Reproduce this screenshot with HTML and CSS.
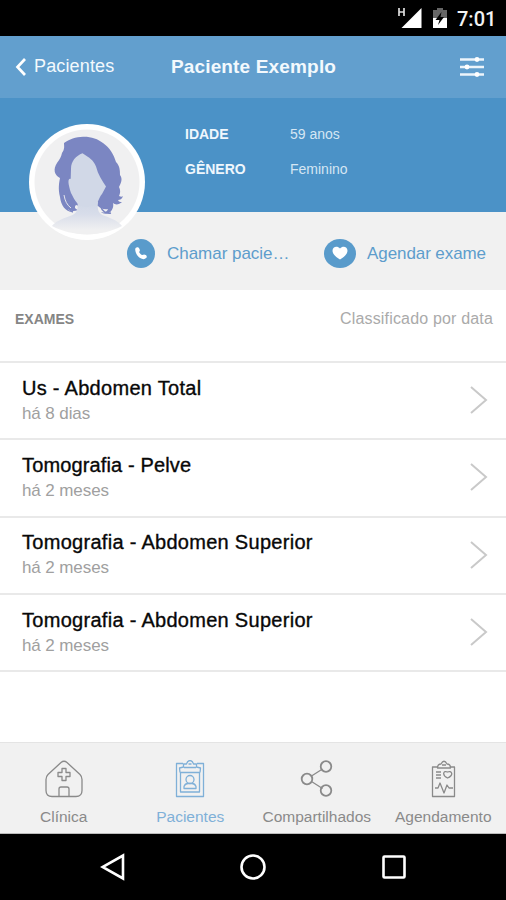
FILE: index.html
```html
<!DOCTYPE html>
<html lang="pt-BR">
<head>
<meta charset="utf-8">
<title>Paciente Exemplo</title>
<link rel="stylesheet" href="styles.css">
</head>
<body>
<div class="status">
  <svg class="signal" width="26" height="24" viewBox="0 0 26 24"><path d="M3 2v8M8 2v8M3 6h5" stroke="#ddd" stroke-width="1.700" fill="none"/><path d="M25.500 2v20H5.500z" fill="#fff"/></svg>
  <svg class="battery" width="16" height="22" viewBox="0 0 16 22"><path d="M1 3h4V1h6v2h4v8H1z" fill="#666"/><path d="M1 11h14v10H1z" fill="#fff"/><path d="M9.500 5 3.500 13h4L6 18l6-8H8.500z" fill="#000"/></svg>
  <span class="clock">7:01</span>
</div>
<header class="topbar">
  <div class="back"><svg width="12" height="20" viewBox="0 0 12 20"><path d="M10 2 2.500 10l7.500 8" fill="none" stroke="#fff" stroke-width="2.700"/></svg><span>Pacientes</span></div>
  <h1>Paciente Exemplo</h1>
  <svg class="filters" width="26" height="20" viewBox="0 0 26 20"><path d="M1 2.500h24M1 10h24M1 17.500h24" stroke="#edf5fb" stroke-width="2.300"/><g fill="#fff"><circle cx="18" cy="2.500" r="2.400"/><circle cx="8" cy="10" r="2.400"/><circle cx="18" cy="17.500" r="2.400"/></g></svg>
</header>
<section class="profile">
  <div class="avatar">
    <svg width="116" height="116" viewBox="0 0 116 116">
      <defs><linearGradient id="skin" gradientUnits="userSpaceOnUse" x1="0" y1="80" x2="0" y2="106"><stop offset="0" stop-color="#d1d8e7"/><stop offset=".4" stop-color="#d8ddea"/><stop offset="1" stop-color="#f0f0f1"/></linearGradient></defs>
      <circle cx="58" cy="58" r="58" fill="#fff"/><circle cx="58" cy="58" r="52.500" fill="#f0f0f1"/>
      <path d="M35 19c5-4 12-6 19-6.300 8-.2 15 2.300 20 6.300 7 5 11 12 13 19 4 4 4 9 4 13 3 4 1 8-1 12 2 4 1 7 0 9 2 1 3 1 4 0-1 3-3 4-5 4 1 2 2 2 4 2-3 3-7 3-9 1 1 4-1 8-4 10-3 1-6 1-8-1 3 1 6 0 7-3-4 1-8-1-10-3-8 2-15 2-22-1-2 2-1 4 2 5-4 2-8 1-10-1 1 2 3 3 5 3-8 0-12-7-13-15-2-8-1-14 0-19-6-3-7-9-3-15 3-4 4-6 5-10 3-4 2-7 2-10z" fill="#7b86c2"/>
      <path d="M48.500 78c1 9-1.500 12-7.500 14-9 3-15 6-18 10 20 11 50 11 70 0-4-5-9-7-17-10-6-2-8-5-7-14z" fill="url(#skin)"/>
      <path d="M43 82c-4 2-3 5 1 6M72 83c1 4 5 7 10 6" fill="none" stroke="#7b86c2" stroke-width="1.500"/>
      <path d="m35 71c1 6 3 10 7 13" fill="none" stroke="#f0f0f1" stroke-width=".9"/>
      <path d="M53.500 29.300C47 32 42 37 42 45l-.3 10c-3-1-3 4 .3 14 3 6 5 9 8 12 5 3 14 2 18-1 2-5 3-8 5-10l4-7.500c-4-6-8-12-10-20-3-7-6-8-13.500-13.200z" fill="#d1d8e7"/>
    </svg>
  </div>
  <dl><dt>IDADE</dt><dd>59 anos</dd><dt>GÊNERO</dt><dd>Feminino</dd></dl>
</section>
<section class="actions">
  <a class="call"><svg width="28" height="29" viewBox="0 0 28 29"><ellipse cx="14" cy="14.500" rx="14" ry="14.500" fill="#599bcb"/><path d="M8.200 10.200c0-1.500 2-2.500 3.200-1.600.8.600 1.700 2.200 1.400 3.300l-.8 1c1 1.700 1.900 2.500 3.500 3.200 1-1 2.200-.9 3.300 0 1.200.9 1.300 1.900.3 3-1.500 1.700-4 1.200-6-.1-3-2-4.900-5.600-4.900-8.800z" fill="#fff"/></svg><span>Chamar pacie…</span></a>
  <a class="schedule"><svg width="32" height="29" viewBox="0 0 32 29"><ellipse cx="16" cy="14.500" rx="16" ry="14.500" fill="#599bcb"/><path d="M16 20.500c-4-2.400-7.500-5.500-7.500-8.700 0-4.500 5-5.300 7.500-2.300 2.500-3 7.500-2.200 7.500 2.300 0 3.200-3.500 6.300-7.500 8.700z" fill="#fff"/></svg><span>Agendar exame</span></a>
</section>
<div class="listhead"><h2>EXAMES</h2><span>Classificado por data</span></div>
<ul class="exams">
  <li><div><b>Us - Abdomen Total</b><small>há 8 dias</small></div><svg width="18" height="30" viewBox="0 0 18 30"><path d="m1 2 15 13L1 28"/></svg></li>
  <li><div><b class="snug">Tomografia - Pelve</b><small>há 2 meses</small></div><svg width="18" height="30" viewBox="0 0 18 30"><path d="m1 2 15 13L1 28"/></svg></li>
  <li><div><b>Tomografia - Abdomen Superior</b><small>há 2 meses</small></div><svg width="18" height="30" viewBox="0 0 18 30"><path d="m1 2 15 13L1 28"/></svg></li>
  <li><div><b>Tomografia - Abdomen Superior</b><small>há 2 meses</small></div><svg width="18" height="30" viewBox="0 0 18 30"><path d="m1 2 15 13L1 28"/></svg></li>
</ul>
<nav class="tabs">
  <a><svg width="38" height="38" viewBox="0 0 38 38"><path d="M16 2.500q3-2.500 6 0l13 12q2 2 2 5v11q0 6-6 6H7q-6 0-6-6v-11q0-3 2-5z"/><path d="M17 8.500h4v4h4v4h-4v4h-4v-4h-4v-4h4zM14 36v-7q0-2 2-2h6q2 0 2 2v7"/></svg><span>Clínica</span></a>
  <a class="active"><svg width="38" height="38" viewBox="0 0 38 38"><path d="M12 3.500H5.500v33h27v-33H26M9.500 12.500v19.500h19V12.500zM9 12.500 8.500 8l4-1V4h3q1-3.500 3.500-3.500T22.500 4h3v3l4 1-.5 4.500M13 7.500h12M17.500 4h3"/><circle cx="19" cy="19.500" r="4"/><path d="M13 28.500v-2q1-3 4-3h4q3 0 4 3v2z"/></svg><span>Pacientes</span></a>
  <a><svg width="38" height="38" viewBox="0 0 38 38"><path d="m13.500 16 11-7M13.500 21.500l11 7"/><g stroke-width="1.800"><circle cx="9" cy="19" r="5.300"/><circle cx="28" cy="6.500" r="5.300"/><circle cx="28" cy="30.500" r="5.300"/></g></svg><span>Compartilhados</span></a>
  <a><svg width="38" height="38" viewBox="0 0 38 38"><path d="M14 7H8.500v29.500h22V7H26M13.500 8q0-4 3.500-4 3-5.500 6 0 3.500 0 3.500 4zM18 5h4M12 12h5M12 15h5M12 18h5M23.500 18c-6-3-4-8 0-6 4-2 7 3 0 6zM11 28h3l2-5 4 10 3-8 2 3h4"/></svg><span>Agendamento</span></a>
</nav>
<footer class="sysnav">
  <svg width="26" height="28" viewBox="0 0 26 28"><path d="M23 2.500v23L2.500 14z"/></svg>
  <svg width="28" height="28" viewBox="0 0 28 28"><circle cx="14" cy="14" r="11.500"/></svg>
  <svg width="26" height="28" viewBox="0 0 26 28"><rect x="2.500" y="3.500" width="21" height="21" rx="1"/></svg>
</footer>
</body>
</html>
```

FILE: styles.css
```css
* { box-sizing: border-box; margin: 0; padding: 0; }
body { width: 506px; height: 900px; overflow: hidden; background: #fff; font-family: "Liberation Sans", Arial, sans-serif; }
svg { display: block; flex: none; }
span, h1, h2, b, small, dt, dd { white-space: nowrap; }
.status { height: 36px; background: #000; display: flex; align-items: center; justify-content: flex-end; padding-right: 11px; color: #f2f2f2; }
.signal { margin-right: 10px; }
.battery { margin-right: 9px; }
.clock { font: 500 20px/36px Roboto, sans-serif; width: 38px; padding-top: 2px; }
.topbar { height: 62px; background: #629fce; color: #f3f9fd; display: grid; grid-template-columns: 155px 1fr 155px; align-items: center; padding-bottom: 1px; }
.back { display: flex; align-items: center; gap: 7px; padding-left: 15px; font-size: 18px; letter-spacing: .15px; }
.topbar h1 { font-size: 19px; letter-spacing: .16px; text-align: center; padding-left: 1px; }
.filters { justify-self: end; margin-right: 21px; }
.profile { height: 114px; background: #4b92c7; color: #eff7fd; display: flex; align-items: flex-start; padding: 26px 0 0 29px; }
.avatar { position: relative; width: 116px; height: 116px; flex: none; }
dl { display: grid; grid-template-columns: 105px auto; row-gap: 15px; margin-left: 40px; font-size: 14px; line-height: 20px; }
dt { font-weight: 700; }
dd { color: #d5e6f3; }
.actions { height: 78px; background: #f1f1f1; color: #5d9dcc; display: flex; align-items: center; padding: 5px 0 0 127px; font-size: 17px; }
.actions a { display: flex; align-items: center; gap: 12px; }
.call { width: 197px; }
.call span { letter-spacing: -.03px; }
.actions .schedule { gap: 11px; }
.schedule span { letter-spacing: -.08px; }
.listhead { height: 71px; display: flex; justify-content: space-between; padding: 20px 13px 0 15px; line-height: 18px; color: #aaa; font-size: 16px; letter-spacing: .17px; }
.listhead h2 { font-size: 14px; line-height: 19px; letter-spacing: 0; color: #858585; }
.exams { list-style: none; border-top: 2px solid #e9e9e9; height: 310px; }
.exams li { height: 77.3px; border-bottom: 2px solid #e9e9e9; padding: 0 18px 0 22px; display: flex; align-items: center; justify-content: space-between; }
.exams b { display: block; font-size: 20px; line-height: 24px; font-weight: 400; letter-spacing: .29px; color: #080808; -webkit-text-stroke: .35px #080808; margin-bottom: 2px; }
.exams .snug { letter-spacing: .14px; }
.exams small { display: block; font-size: 17px; line-height: 24px; letter-spacing: -.1px; color: #a0a0a0; }
.exams svg { fill: none; stroke: #c9c9c9; stroke-width: 2; margin-bottom: 1px; }
.tabs { margin-top: 71px; height: 92px; background: #f1f1f1; border-top: 1px solid #e4e4e4; border-bottom: 1px solid #bbb; display: grid; grid-template-columns: repeat(4, 126.5px); color: #8a8a8a; }
.tabs a { display: flex; flex-direction: column; align-items: center; padding: 17px 0 0 1px; gap: 9px; font-size: 15.500px; line-height: 20px; }
.tabs svg { fill: none; stroke: currentColor; stroke-width: 1.300; stroke-linejoin: round; }
.tabs .active { color: #7fb0d8; }
.sysnav { height: 66px; background: #000; display: grid; grid-template-columns: 26px 28px 26px; justify-content: center; column-gap: 113.500px; align-items: center; }
.sysnav svg { fill: none; stroke: #fff; stroke-width: 2.600; }
```
